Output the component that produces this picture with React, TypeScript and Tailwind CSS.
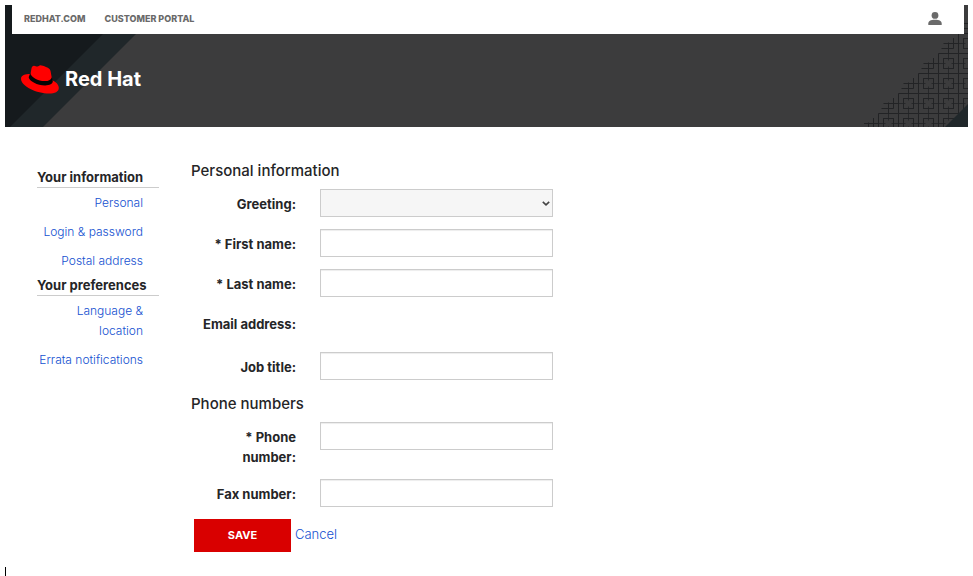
import React from "react";

const SIDEBAR: { title: string; links: string[] }[] = [
  {
    title: "Your information",
    links: ["Personal", "Login & password", "Postal address"],
  },
  {
    title: "Your preferences",
    links: ["Language & location", "Errata notifications"],
  },
];

// Diagonal bands behind the logo.
function HeaderStripes() {
  return (
    <svg
      className="absolute left-0 top-0 h-full"
      viewBox="0 0 160 122"
      preserveAspectRatio="xMinYMin meet"
      aria-hidden="true"
    >
      <path d="M0 0H160L38 122H0Z" fill="#20272a" />
      <path d="M0 0H127L5 122H0Z" fill="#151a1d" />
    </svg>
  );
}

const ROWS = [18, 38, 58, 78, 98, 118];
const COLS = [4, 24, 44, 64, 84, 104];

// Stepped lattice in the right corner. Tiles above the diagonal are skipped,
// tiles on it are drawn open.
function HeaderLattice() {
  return (
    <svg
      className="absolute right-0 top-0 h-full"
      viewBox="0 0 104 122"
      preserveAspectRatio="xMaxYMin meet"
      fill="none"
      stroke="#222325"
      aria-hidden="true"
    >
      {ROWS.map((y) =>
        COLS.map((x) => {
          if (x + y < 122) return null;
          const key = `${x}-${y}`;
          if (x + y === 122) {
            return (
              <path
                key={key}
                d={`M${x - 4.5} ${y + 0.5}h15M${x + 0.5} ${y - 0.5}v11M${x + 5.5} ${y - 5}v10.5h-12`}
              />
            );
          }
          return (
            <g key={key}>
              <path d={`M${x - 9.5} ${y + 10}v-19.5h20`} />
              <rect x={x - 4.5} y={y - 4.5} width="10" height="10" />
              <path
                strokeOpacity="0.8"
                d={`M${x - 9.5} ${y + 0.5}h7M${x + 3.5} ${y + 0.5}h7M${x + 0.5} ${y - 9.5}v7M${x + 0.5} ${y + 3.5}v7`}
              />
            </g>
          );
        })
      )}
      <path d="M81 122L104 99V122Z" fill="#20272a" stroke="none" />
    </svg>
  );
}

function Fedora() {
  return (
    <svg className="h-[29px] w-[38px]" viewBox="0 0 38 29" aria-hidden="true">
      <path
        d="M9.5 9C4 9 0 10.2 0 13.8 0 21.5 16 28.6 28 28.6c6 0 9.8-2 9.8-5.6 0-3.2-2.5-6-6.6-7.8L29.6 6.2C29.2 4 27.800 2.900 25 1.900 23 1.1 20.8.3 19.400.3c-1.400 0-1.700 1.300-3 1.300-1.300 0-2-.9-3.400-.9-1.400 0-2.100.9-2.500 2.600Z"
        fill="#f00"
      />
      <path
        d="M9.200 8.200 7.700 12.200c.6 3.900 8.600 8.200 16.400 8.200 4.600 0 7.600-1.300 7.700-4.100l-1-4.100c-.6 2.400-2.800 3.900-7.200 3.900-6.600 0-13.200-3.800-14.400-7.900Z"
        fill="#050505"
      />
    </svg>
  );
}

function Header() {
  return (
    <header className="relative bg-[#3c3c3d]">
      <HeaderStripes />
      <HeaderLattice />
      <div className="relative ml-[7px] mr-1 flex h-[29px] items-center justify-between bg-white pl-3 pr-[22px]">
        <nav className="flex gap-[19px] pb-0.5 text-[9px] font-extrabold text-[#6a6a6a]">
          <a href="#redhat">REDHAT.COM</a>
          <a href="#portal">CUSTOMER PORTAL</a>
        </nav>
        <button type="button" aria-label="Account" className="pb-0.5">
          <svg className="h-[13px] w-[14px]" viewBox="0 0 14 13" fill="#6a6a6a" aria-hidden="true">
            <circle cx="7" cy="3.4" r="3.4" />
            <path d="M.3 13v-1.4C.3 9.2 2.5 7.7 7 7.7s6.700 1.500 6.700 3.900V13Z" />
          </svg>
        </button>
      </div>
      <div className="relative flex h-[93px] items-center px-4 pb-[3px]">
        <a href="#home" className="flex items-center gap-1.5 text-[20px] font-bold text-white">
          <Fedora />
          Red Hat
        </a>
      </div>
    </header>
  );
}

function Sidebar() {
  return (
    <aside className="w-[122px] shrink-0 pt-1.5">
      {SIDEBAR.map((group) => (
        <section key={group.title}>
          <h2 className="border-b border-[#ccc] text-[13px] font-bold leading-5 whitespace-nowrap">
            {group.title}
          </h2>
          <ul className="pt-[5px] pr-4 text-right text-[12px] font-light leading-5 text-[#1450d0]">
            {group.links.map((link) => (
              <li key={link} className="mb-[9px] pl-4 last:mb-1">
                <a href="#section" className={link.startsWith("Language") ? "" : "-ml-8 whitespace-nowrap"}>
                  {link}
                </a>
              </li>
            ))}
          </ul>
        </section>
      ))}
    </aside>
  );
}

interface FieldProps {
  id: string;
  label: string;
  children?: React.ReactNode;
}

function Field({ id, label, children }: FieldProps) {
  return (
    <div className="mb-3 flex min-h-7 items-start gap-6">
      <label htmlFor={id} className="w-[105px] shrink-0 pt-[5px] text-right text-[13px] font-bold leading-5">
        {label}
      </label>
      {children}
    </div>
  );
}

function TextField({ id, label }: FieldProps) {
  return (
    <Field id={id} label={label}>
      <input
        id={id}
        type="text"
        className="h-7 w-[233px] border border-[#ccc] bg-white px-2 text-[13px] shadow-[inset_0_1px_1px_rgba(0,0,0,0.075)]"
      />
    </Field>
  );
}

export default function App() {
  return (
    <div className="bg-white p-[5px] font-['Inter',sans-serif] text-[#252527]">
      <Header />
      <main className="flex items-start gap-8 px-8 pt-[34px]">
        <Sidebar />
        <form onSubmit={(e) => e.preventDefault()}>
          <h3 className="mb-2 text-[15px] font-medium leading-5">Personal information</h3>
          <Field id="greeting" label="Greeting:">
            <div className="relative">
              <select
                id="greeting"
                className="block h-7 w-[233px] appearance-none border border-[#ccc] bg-[#f6f6f6] px-2 text-[13px]"
              >
                <option></option>
                <option>Mr.</option>
                <option>Ms.</option>
              </select>
              <svg
                className="pointer-events-none absolute right-[3px] top-3 h-[5px] w-2"
                viewBox="0 0 8 5"
                fill="none"
                stroke="#444"
                strokeWidth="1.6"
                aria-hidden="true"
              >
                <path d="M.8.8 4 3.8 7.2.8" />
              </svg>
            </div>
          </Field>
          <TextField id="first" label="* First name:" />
          <TextField id="last" label="* Last name:" />
          <Field id="email" label="Email address:">
            <output id="email" className="h-[31px]" />
          </Field>
          <TextField id="job" label="Job title:" />
          <h3 className="mb-2 pt-0.5 text-[15px] font-medium leading-5">Phone numbers</h3>
          <TextField id="phone" label="* Phone number:" />
          <TextField id="fax" label="Fax number:" />
          <div className="flex items-center gap-1 pl-[3px]">
            <button type="submit" className="h-[33px] w-[97px] bg-[#d90000] text-[11px] font-bold text-white">
              SAVE
            </button>
            <a href="#cancel" className="pb-0.5 text-[13px] font-light text-[#1450d0]">
              Cancel
            </a>
          </div>
        </form>
      </main>
      <div className="mt-[15px] h-[9px] w-px bg-black" />
    </div>
  );
}
